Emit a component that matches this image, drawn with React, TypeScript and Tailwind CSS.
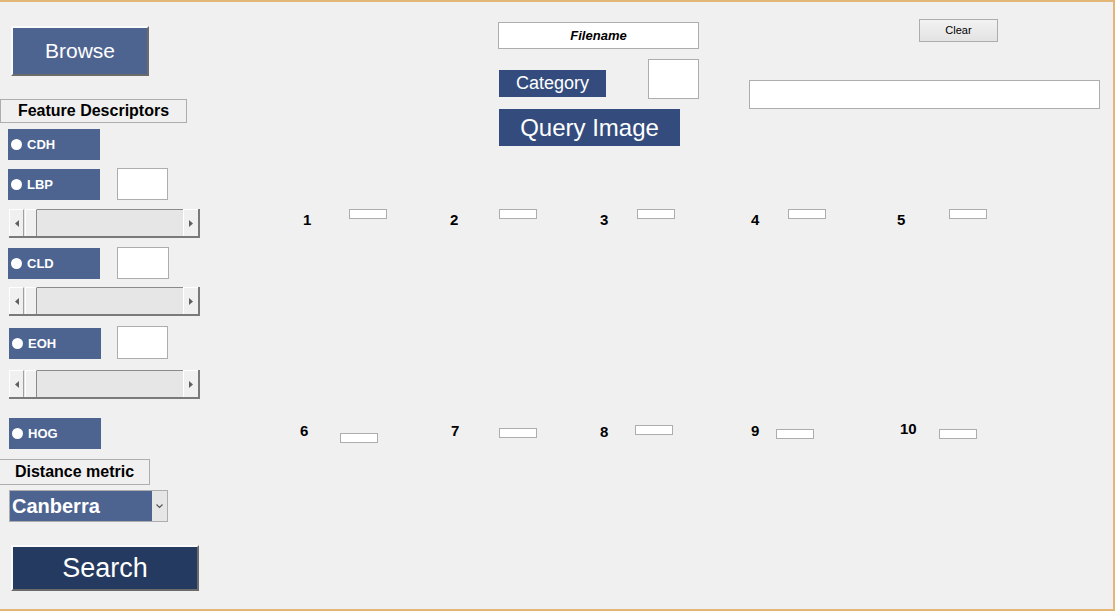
import React from "react";

const F = { fontFamily: '"Liberation Sans", Arial, sans-serif' };

function Radio({ label }: { label: string }) {
  return (
    <div className="flex h-[31px] w-[92px] items-center bg-[#4d6491] pl-[2px]">
      <span className="ml-[1px] h-[11px] w-[11px] rounded-full bg-white" />
      <span className="ml-[5px] text-[13px] font-bold leading-none text-white">{label}</span>
    </div>
  );
}

function EditBox({ className = "" }: { className?: string }) {
  return <div className={"border border-[#adadad] bg-white " + className} />;
}

function Slider() {
  return (
    <div className="ml-[9px] flex h-[29px] w-[191px] border-b-2 border-r-2 border-[#7a7a7a] bg-[#e6e6e6]">
      <div className="flex w-[15px] items-center justify-center border-l border-t border-r border-white border-r-[#a0a0a0] bg-[#f0f0f0]">
        <svg width="4" height="7" viewBox="0 0 4 7"><path d="M4 0 L0 3.5 L4 7 Z" fill="#606060" /></svg>
      </div>
      <div className="ml-[1px] w-[12px] border-l border-t border-white border-r border-r-[#8a8a8a] bg-[#f0f0f0]" />
      <div className="flex-1 border-t border-[#8a8a8a]" />
      <div className="flex w-[15px] items-center justify-center border-l border-t border-white bg-[#f0f0f0]">
        <svg width="4" height="7" viewBox="0 0 4 7"><path d="M0 0 L4 3.5 L0 7 Z" fill="#606060" /></svg>
      </div>
    </div>
  );
}

function ResultLabel({ n, x, y, bx, by }: { n: string; x: number; y: number; bx: number; by: number }) {
  return (
    <>
      <div className="absolute text-[15px] font-bold leading-none text-black" style={{ left: x, top: y }}>
        {n}
      </div>
      <div className="absolute h-[10px] w-[38px] border border-[#adadad] bg-white" style={{ left: bx, top: by }} />
    </>
  );
}

export default function App() {
  return (
    <div
      className="relative h-[611px] w-[1115px] overflow-hidden border-t-2 border-r-2 border-b-2 border-[#e3b577] bg-[#f0f0f0]"
      style={F}
    >
      {/* Left column */}
      <div className="flex flex-col">
        <div className="ml-[11px] mt-[24px] flex h-[50px] w-[138px] items-center justify-center border-l-2 border-t-2 border-[#fafafa] border-b-2 border-r-2 border-b-[#6b6b6b] border-r-[#6b6b6b] bg-[#4d6491] text-[21px] text-white">
          Browse
        </div>
        <div className="mt-[23px] flex h-[24px] w-[187px] items-center justify-center border border-[#adadad] text-[16px] font-bold text-black">
          Feature Descriptors
        </div>
        <div className="ml-[8px] mt-[6px]">
          <Radio label="CDH" />
        </div>
        <div className="ml-[8px] mt-[9px] flex items-start">
          <Radio label="LBP" />
          <EditBox className="ml-[17px] -mt-[1px] h-[32px] w-[51px]" />
        </div>
        <div className="mt-[9px]">
          <Slider />
        </div>
        <div className="ml-[8px] mt-[10px] flex items-start">
          <Radio label="CLD" />
          <EditBox className="ml-[17px] -mt-[1px] h-[32px] w-[52px]" />
        </div>
        <div className="mt-[8px]">
          <Slider />
        </div>
        <div className="ml-[9px] mt-[12px] flex items-start">
          <Radio label="EOH" />
          <EditBox className="ml-[16px] -mt-[2px] h-[33px] w-[51px]" />
        </div>
        <div className="mt-[11px]">
          <Slider />
        </div>
        <div className="ml-[9px] mt-[19px]">
          <Radio label="HOG" />
        </div>
        <div className="mt-[10px] flex h-[26px] w-[150px] items-center justify-center border border-l-0 border-[#adadad] text-[16px] font-bold text-black">
          Distance metric
        </div>
        <div className="ml-[9px] mt-[5px] flex h-[32px] w-[159px] border border-[#adadad]">
          <div className="flex flex-1 items-center bg-[#4d6491] pl-[2px] text-[20px] font-bold text-white">Canberra</div>
          <div className="flex w-[15px] items-center justify-center bg-[#e6e6e6]">
            <svg width="7" height="5" viewBox="0 0 7 5"><path d="M0.5 0.5 L3.5 3.5 L6.5 0.5" stroke="#555" strokeWidth="1.2" fill="none" /></svg>
          </div>
        </div>
        <div className="ml-[11px] mt-[23px] flex h-[46px] w-[188px] items-center justify-center border-l-2 border-t-2 border-[#fafafa] border-b-2 border-r-2 border-b-[#6b6b6b] border-r-[#6b6b6b] bg-[#253a60] text-[27px] text-white">
          Search
        </div>
      </div>

      {/* Query area */}
      <div className="absolute left-[498px] top-[20px] flex h-[27px] w-[201px] items-center justify-center border border-[#adadad] bg-white text-[13px] font-bold italic text-black">
        Filename
      </div>
      <div className="absolute left-[499px] top-[68px] flex h-[27px] w-[107px] items-center justify-center bg-[#344c7d] text-[18px] text-white">
        Category
      </div>
      <div className="absolute left-[648px] top-[57px] h-[40px] w-[51px] border border-[#adadad] bg-white" />
      <div className="absolute left-[499px] top-[107px] flex h-[37px] w-[181px] items-center justify-center bg-[#344c7d] text-[24px] text-white">
        Query Image
      </div>

      <div className="absolute left-[919px] top-[17px] flex h-[23px] w-[79px] items-center justify-center border border-[#adadad] bg-gradient-to-b from-[#f2f2f2] to-[#e3e3e3] text-[11px] text-black">
        Clear
      </div>
      <div className="absolute left-[749px] top-[78px] h-[29px] w-[351px] border border-[#adadad] bg-white" />

      {/* Results */}
      <ResultLabel n="1" x={303} y={210} bx={349} by={207} />
      <ResultLabel n="2" x={450} y={210} bx={499} by={207} />
      <ResultLabel n="3" x={600} y={210} bx={637} by={207} />
      <ResultLabel n="4" x={751} y={210} bx={788} by={207} />
      <ResultLabel n="5" x={897} y={210} bx={949} by={207} />
      <ResultLabel n="6" x={300} y={421} bx={340} by={431} />
      <ResultLabel n="7" x={451} y={421} bx={499} by={426} />
      <ResultLabel n="8" x={600} y={422} bx={635} by={423} />
      <ResultLabel n="9" x={751} y={421} bx={776} by={427} />
      <ResultLabel n="10" x={900} y={419} bx={939} by={427} />
    </div>
  );
}
